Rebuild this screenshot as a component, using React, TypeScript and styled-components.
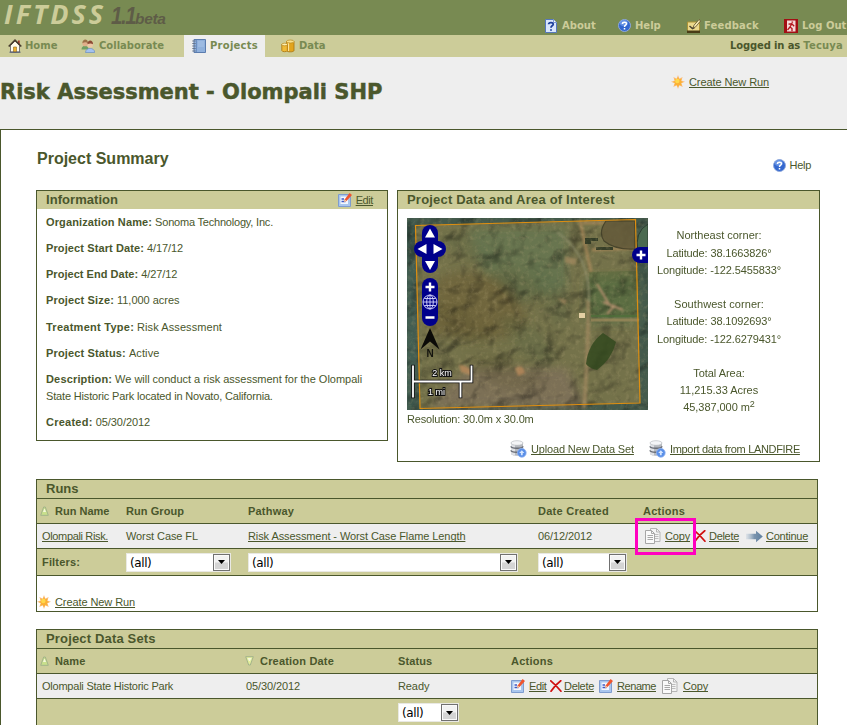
import React from "react";
import styled, { createGlobalStyle } from "styled-components";

const ink = "#4a572c";
const khaki = "#cccc99";
const moss = "#788a52";
const pale = "#eeeeee";

const GlobalStyle = createGlobalStyle`
  html, body { margin: 0; padding: 0; background: #fff; overflow: hidden; }
  body { font: 11px/17px "Liberation Sans", Arial, sans-serif; color: ${ink}; }
  * { box-sizing: border-box; }
  svg { display: block; flex: none; }
`;

const Page = styled.div`
  width: 847px;
  height: 725px;
  overflow: hidden;
  display: flex;
  flex-direction: column;
`;

const T = styled.span<{ $ls?: number }>`
  letter-spacing: ${(p) => p.$ls ?? 0}px;
  white-space: nowrap;
`;

/* ---------- top bar ---------- */
const TopBar = styled.header`
  height: 35px;
  flex: none;
  background: ${moss};
  display: flex;
  justify-content: space-between;
`;
const Logo = styled.div`
  display: flex;
  align-items: baseline;
  height: 35px;
  padding-left: 4px;
  white-space: nowrap;
`;
const LogoName = styled.span`
  font: italic 700 27px/28px "Open Sans", "Noto Sans", sans-serif;
  color: ${khaki};
  letter-spacing: 3px;
  width: 107px;
`;
const LogoVersion = styled.span`
  font: italic bold 24px/28px "Liberation Sans", sans-serif;
  color: #5e5c47;
  letter-spacing: -1.6px;
  width: 24px;
  transform: scaleX(0.85);
  transform-origin: left;
`;
const LogoBeta = styled.span`
  font: italic bold 15.5px/28px "Liberation Sans", sans-serif;
  color: #5e5c47;
  letter-spacing: -0.3px;
`;
const TopLinks = styled.nav`
  display: flex;
  width: 302px;
  padding-top: 17px;
`;
const BarItem = styled.a<{ $w: number; $icon: number; $tone?: string }>`
  display: grid;
  grid-template-columns: ${(p) => p.$icon}px auto;
  justify-content: start;
  align-items: center;
  width: ${(p) => p.$w}px;
  flex: none;
  height: 16px;
  font: bold 10px/16px "DejaVu Sans", Verdana, sans-serif;
  color: ${(p) => p.$tone ?? khaki};
`;

/* ---------- tab bar ---------- */
const TabBar = styled.nav`
  height: 22px;
  flex: none;
  background: ${khaki};
  display: flex;
`;
const Tab = styled.div<{ $w: number; $pad: number; $active?: boolean }>`
  width: ${(p) => p.$w}px;
  height: 22px;
  padding: 2px 0 0 ${(p) => p.$pad}px;
  background: ${(p) => (p.$active ? pale : "transparent")};
`;
const BarText = styled(T)`
  padding-top: 1px;
`;
const Session = styled.div`
  margin-left: auto;
  padding: 3px 4px 0 0;
  font: bold 10px/16px "DejaVu Sans", Verdana, sans-serif;
  span + span { color: ${moss}; margin-left: 3px; }
`;

/* ---------- title ---------- */
const TitleBar = styled.div`
  height: 72px;
  flex: none;
  background: ${pale};
  display: flex;
  padding-top: 16px;
`;
const Title = styled.h1`
  margin: 0;
  padding-top: 4px;
  width: 671px;
  font: bold 21px/30px "DejaVu Sans", sans-serif;
  -webkit-text-stroke: 0.5px ${ink};
  white-space: nowrap;
`;
const IconLink = styled.a<{ $icon: number; $w?: number }>`
  display: grid;
  grid-template-columns: ${(p) => p.$icon}px auto;
  justify-content: start;
  align-items: center;
  height: 18px;
  flex: none;
  width: ${(p) => (p.$w ? p.$w + "px" : "auto")};
`;
const U = styled(T)`
  text-decoration: underline;
  text-underline-offset: 1px;
  text-decoration-thickness: 1px;
  text-decoration-skip-ink: none;
`;

/* ---------- main ---------- */
const Main = styled.main`
  flex: 1;
  min-height: 0;
  border: solid ${ink};
  border-width: 1px 0 0 1px;
  padding: 20px 0 0 35px;
  overflow: hidden;
`;
const SummaryHead = styled.div`
  display: flex;
  justify-content: space-between;
  height: 40px;
  padding-right: 36px;
`;
const H2 = styled.h2`
  margin: 0 0 0 1px;
  font: bold 16px/18px "Liberation Sans", sans-serif;
`;
const HelpSpot = styled.div`
  padding-top: 6px;
`;
const Boxes = styled.div`
  display: grid;
  grid-template-columns: 352px 423px;
  column-gap: 9px;
  align-items: start;
`;
const Box = styled.section<{ $h: number }>`
  border: 1px solid ${ink};
  height: ${(p) => p.$h}px;
`;
const BoxHead = styled.div`
  background: ${khaki};
  height: 18px;
  padding: 0 14px 0 9px;
  display: flex;
  justify-content: space-between;
  font: bold 13px/17px "Liberation Sans", sans-serif;
  a { font-weight: normal; font-size: 11px; }
`;
const Facts = styled.div`
  padding: 5px 9px 0;
`;
const Fact = styled.p`
  margin: 0 0 9.15px;
  line-height: 17px;
  b { margin-right: 3px; }
`;
const AreaBody = styled.div`
  display: grid;
  grid-template-columns: 241px 142px;
  padding: 9px 0 0 9px;
  height: 231px;
`;
const Caption = styled.div`
  padding-top: 1px;
`;
const Corners = styled.div`
  text-align: center;
  padding-top: 9.4px;
`;
const Coord = styled.div<{ $gap?: boolean }>`
  line-height: 17.2px;
  height: 17.2px;
  margin-top: ${(p) => (p.$gap ? 17.2 : 0)}px;
  sup { font-size: 9px; line-height: 0; vertical-align: 4px; }
`;
const AreaLinks = styled.div`
  display: flex;
  padding-left: 112px;
`;

/* ---------- tables ---------- */
const Table = styled.section<{ $top: number; $cols: string }>`
  position: relative;
  width: 782px;
  margin-top: ${(p) => p.$top}px;
  border: 1px solid ${ink};
  --cols: ${(p) => p.$cols};
`;
const TableTitle = styled.div`
  background: ${khaki};
  height: 18px;
  padding-left: 9px;
  font: bold 13px/18px "Liberation Sans", sans-serif;
`;
const TableRow = styled.div<{ $h: number; $pale?: boolean; $bold?: boolean }>`
  display: grid;
  grid-template-columns: var(--cols);
  align-items: center;
  height: ${(p) => p.$h}px;
  border-top: 1px solid ${ink};
  background: ${(p) => (p.$pale ? pale : khaki)};
  font-weight: ${(p) => (p.$bold ? "bold" : "normal")};
`;
const Cell = styled.div<{ $pad?: number }>`
  display: flex;
  align-items: center;
  padding-left: ${(p) => p.$pad ?? 5}px;
  white-space: nowrap;
`;
const SortHead = styled.div<{ $icon: number }>`
  display: grid;
  grid-template-columns: ${(p) => p.$icon}px auto;
  align-items: center;
`;
const TableFoot = styled.div`
  height: 36px;
  border-top: 1px solid ${ink};
  padding: 17px 0 0 0;
`;
const SelectBox = styled.div<{ $w: number }>`
  width: ${(p) => p.$w}px;
  height: 19px;
  border: 1px solid #e9e9e4;
  background: #fff;
  display: flex;
  justify-content: space-between;
  padding-left: 3px;
  color: #000;
  font: 12px/19px "DejaVu Sans", Tahoma, sans-serif;
  letter-spacing: -0.4px;
`;
const SelectButton = styled.span`
  width: 17px;
  height: 17px;
  border: 1px solid #707070;
  box-shadow: inset 0 0 0 1px #fafafa;
  background: linear-gradient(#f2f2f2 45%, #d4d4d4 55%);
  display: grid;
  place-items: center;
`;
const Highlight = styled.div`
  position: absolute;
  left: 598px;
  top: 38px;
  width: 61px;
  height: 37px;
  border: 3px solid #ff00bf;
`;

/* ---------- icons ---------- */
const AboutIcon = () => (
  <svg width="12" height="14" viewBox="0 0 12 14">
    <path d="M.5 .5h8l3 3v10H.5z" fill="#d9e6fb" stroke="#5577bb" />
    <path d="M8.5 .5v3h3" fill="#fff" stroke="#7d9bd2" />
    <path d="M3.6 5.3C3.8 2.9 8.4 3 8.2 5.5C8 7 6 6.8 6 8.8M6 10.2v1.6" fill="none" stroke="#1c3f9c" strokeWidth="1.8" />
  </svg>
);
const HelpIcon = () => (
  <svg width="13" height="13" viewBox="0 0 13 13">
    <circle cx="6.5" cy="6.5" r="6" fill="#3468cf" stroke="#8fa9dc" />
    <ellipse cx="5.8" cy="4" rx="4" ry="3" fill="#7ea6ee" opacity=".7" />
    <path d="M4.4 5C4.5 2.6 8.7 2.7 8.5 5C8.3 6.3 6.5 6.2 6.5 8M6.5 9v1.5" fill="none" stroke="#fff" strokeWidth="1.5" />
  </svg>
);
const FeedbackIcon = () => (
  <svg width="14" height="14" viewBox="0 0 14 14">
    <path d="M.5 3h12v10H.5z" fill="#ecd98c" stroke="#ad9336" />
    <path d="M0 11.5h13V14H0z" fill="#4a3c16" />
    <path d="M2.5 7l3 2.5 2-1" fill="none" stroke="#4c4634" strokeWidth="1.5" />
    <path d="M6 9l1-2.8L12 .6l1.6 1.3-5 6z" fill="#f7eab4" stroke="#5a4c2a" strokeWidth=".8" />
  </svg>
);
const LogoutIcon = () => (
  <svg width="14" height="14" viewBox="0 0 14 14">
    <path d="M0 0h14v14H0z" fill="#a30f14" />
    <path d="M3 1.5h8.5v11H3z" fill="#f4dada" />
    <path d="M7.5 3.2h1.6M8 4.5L6 8l2 1.6v2.6M6 8l-2.5 3M4.5 5.2L7.8 4.8l2.4 2.4" fill="none" stroke="#b3151b" strokeWidth="1.3" />
  </svg>
);
const HomeIcon = () => (
  <svg width="14" height="14" viewBox="0 0 14 14">
    <path d="M2.5 6.5L7 2l4.5 4.5v6.5h-9z" fill="#fffbe9" stroke="#777" />
    <path d="M10 1.5h1.7v4H10z" fill="#a33b2a" />
    <path d="M.7 7.5L7 1.2l6.3 6.3" fill="none" stroke="#473c2c" strokeWidth="1.7" />
    <path d="M5.5 8h3v5h-3z" fill="#eeb22e" stroke="#8e6a1c" strokeWidth=".6" />
    <path d="M1.5 13.2h11" stroke="#4c5572" />
  </svg>
);
const PeopleIcon = () => (
  <svg width="14" height="14" viewBox="0 0 14 14">
    <path d="M.5 10.5c0-5 7-5 7 0z" fill="#6f9f62" />
    <circle cx="4.2" cy="4.4" r="2.8" fill="#e0ae8a" />
    <path d="M1.4 4.2c0-5 5.8-5 5.6 0C5.5 3 3.5 2.8 1.4 4.2z" fill="#9a7248" />
    <path d="M4.5 13.5c0-5.5 9.2-5.5 9.2 0z" fill="#a4c2ee" stroke="#5d86c4" strokeWidth=".6" />
    <circle cx="9.2" cy="5.8" r="2.8" fill="#edc6a5" />
    <path d="M6.4 5.3c0-5 5.8-4.8 5.6 0C10.5 4.2 8.5 4 6.4 5.3z" fill="#8c4a34" />
  </svg>
);
const NotebookIcon = () => (
  <svg width="15" height="14" viewBox="0 0 15 14">
    <path d="M2 .5h11.500v13H2z" fill="#8fb0dc" stroke="#5b7cae" />
    <path d="M4.500 1v12" stroke="#6c8fc2" />
    <path d="M6 3h6M6 5h6M6 7h6" stroke="#a9c4e8" />
    <path d="M.3 2h3.400M.3 4.500h3.400M.3 7h3.400M.3 9.500h3.400M.3 12h3.400" stroke="#66758d" />
  </svg>
);
const DataIcon = () => (
  <svg width="14" height="14" viewBox="0 0 14 14">
    <path d="M5.500 2.500v9c0 1.800 7.500 1.800 7.500 0v-9z" fill="#e2a41e" stroke="#a8720c" strokeWidth=".8" />
    <path d="M7.500 4v8" stroke="#fbe39a" strokeWidth="1.200" />
    <ellipse cx="9.250" cy="2.500" rx="3.750" ry="1.500" fill="#f9e08c" stroke="#b8861a" strokeWidth=".7" />
    <path d="M.8 5.500v6c0 1.600 5.500 1.600 5.500 0v-6z" fill="#f0bb37" stroke="#a8720c" strokeWidth=".8" />
    <ellipse cx="3.600" cy="5.500" rx="2.800" ry="1.300" fill="#fdeeb0" stroke="#b8861a" strokeWidth=".7" />
  </svg>
);
const StarIcon = () => (
  <svg width="14" height="14" viewBox="0 0 14 14">
    <path d="M7 0l1.300 3.400L11.700 1.900 10.400 5.400 14 6.800l-3.600 1.400 1.400 3.700-3.500-1.500L7 14l-1.300-3.600L2.200 12l1.500-3.800L0 6.800l3.700-1.400L2.300 1.900l3.400 1.500z" fill="#fbc084" />
    <path d="M7 1.800l1.200 2.400 2.600-.8-.8 2.500 2.200 1.100-2.200 1.100.8 2.600-2.600-.8L7 12.300 5.800 9.900l-2.600.8.8-2.600L1.800 7 4 5.900l-.8-2.500 2.600.8z" fill="#fbb036" />
    <circle cx="6.300" cy="6" r="2.200" fill="#ffd84c" />
  </svg>
);
const EditIcon = () => (
  <svg width="14" height="14" viewBox="0 0 14 14">
    <path d="M.5 1.500h12v12H.5z" fill="#a9c6ee" stroke="#7e9ccf" />
    <path d="M2.500 3.500h7.500v7.500H2.500z" fill="#f3f8ff" />
    <path d="M3.500 6h2.500M3.500 8.500h4" stroke="#3f58c4" strokeWidth="1.400" />
    <path d="M6 9l.8-2.800L11.600 0l2.400 1.900-5.500 6.200z" fill="#f0552e" />
    <path d="M6 9l.8-2.600 1.700 1.700z" fill="#f6d7b0" />
  </svg>
);
const DatabaseIcon = () => (
  <svg width="17" height="18" viewBox="0 0 17 18">
    <path d="M1 3v10.500c0 3 12 3 12 0V3z" fill="#b5b8be" />
    <path d="M1 3v10.500c0 1 1.500 1.800 4 2.100V4z" fill="#dfe1e5" />
    <path d="M1 6.300c0 2.600 12 2.600 12 0M1 10.300c0 2.600 12 2.600 12 0" fill="none" stroke="#686c75" strokeWidth="1.300" />
    <ellipse cx="7" cy="3" rx="6" ry="2.300" fill="#f4f5f7" stroke="#b0b3b9" strokeWidth=".6" />
    <circle cx="11.800" cy="12.800" r="4.400" fill="#5a8fe8" stroke="#8fb2f0" strokeWidth=".8" />
    <path d="M11.800 10.300l2.600 2.700h-1.700v2.200h-1.800V13H9.200z" fill="#d6e6ff" />
  </svg>
);
const CopyIcon = () => (
  <svg width="16" height="16" viewBox="0 0 16 16">
    <path d="M5.500 .5h6l3.500 3.500v9.500H5.500z" fill="#f4f4f4" stroke="#b5b5b5" />
    <path d="M11.500 .5V4H15" fill="none" stroke="#b5b5b5" />
    <path d="M10 6.500h3.500M10 8.500h3.500M10 10.500h3.500" stroke="#bdbdbd" />
    <path d="M.5 2.500h6l3 3v10h-9z" fill="#fafafa" stroke="#a6a6a6" />
    <path d="M6.500 2.500v3h3M2.500 7.500h5.500M2.500 9.500h5.500M2.500 11.500h5.500" fill="none" stroke="#a8a8a8" />
  </svg>
);
const DeleteIcon = () => (
  <svg width="12" height="12" viewBox="0 0 12 12">
    <path d="M.8 .8C4 3.500 8 7.500 11 11.200M10.800 .7C7 3.500 3.500 7.500 1 11.200" fill="none" stroke="#d01010" strokeWidth="1.700" strokeLinecap="round" />
  </svg>
);
const ArrowIcon = () => (
  <svg width="18" height="13" viewBox="0 0 18 13">
    <defs>
      <linearGradient id="arrowFade">
        <stop offset="0" stopColor="#9fb6cb" stopOpacity=".2" />
        <stop offset=".5" stopColor="#7a94ae" />
        <stop offset="1" stopColor="#5e7f9f" />
      </linearGradient>
    </defs>
    <path d="M0 3.700h10V.8l6.800 5.700L10 12.200V9.300H0z" fill="url(#arrowFade)" />
  </svg>
);
const SortIcon = ({ down }: { down?: boolean }) => (
  <svg width="9" height="10" viewBox="0 0 9 10">
    <path
      d={down ? "M.7 .7h7.600L5.300 9H3.700z" : "M.7 9.300h7.600L5.300 1H3.700z"}
      fill={down ? "#e3ee9c" : "#c9e08c"}
      stroke="#a2b38a"
      strokeLinejoin="round"
    />
    <path d={down ? "M2.500 2h4L5 5H4z" : "M3 6l1.200-3h.6L6 6z"} fill="#f4f8dc" />
  </svg>
);
const Caret = () => (
  <svg width="7" height="4" viewBox="0 0 7 4">
    <path d="M0 0h7L3.500 4z" fill="#000" />
  </svg>
);

const hills = [
  "M30 20q20-14 40 6t30 4q-12 22-34 12t-36-22z",
  "M80 60q14-18 34-6t26 24q-20 14-34 2t-26-20z",
  "M120 40q20 6 34 26t2 44q-16-8-22-30t-14-40z",
  "M20 90q24-12 44 8t22 30q-26 4-40-12t-26-26z",
  "M90 100q22-6 40 12t16 34q-28-2-38-18t-18-28z",
  "M60 140q26-10 46 6t34 8q-14 22-40 16t-40-30z",
];

const AreaMap = () => (
  <svg width="241" height="192" viewBox="0 0 241 192">
    <defs>
      <filter id="terrain" x="0" y="0" width="100%" height="100%" colorInterpolationFilters="sRGB">
        <feTurbulence type="fractalNoise" baseFrequency=".03 .036" numOctaves="3" seed="11" result="n" />
        <feDiffuseLighting in="n" surfaceScale="9" diffuseConstant="1.150" lightingColor="#ffffff">
          <feDistantLight azimuth="215" elevation="60" />
        </feDiffuseLighting>
      </filter>
      <filter id="grain" x="0" y="0" width="100%" height="100%" colorInterpolationFilters="sRGB">
        <feTurbulence type="fractalNoise" baseFrequency=".22" numOctaves="3" seed="4" />
        <feColorMatrix values="0 0 0 0 .74  0 0 0 0 .68  0 0 0 0 .5  2.600 0 0 0 -1.250" />
      </filter>
      <filter id="soft"><feGaussianBlur stdDeviation="5" /></filter>
      <filter id="smudge"><feGaussianBlur stdDeviation="1" /></filter>
      <clipPath id="mapClip"><path d="M0 0h241v192H0z" /></clipPath>
    </defs>
    <g clipPath="url(#mapClip)">
      <path d="M0 0h241v192H0z" fill="#445a4c" />
      <path d="M8.500 7.500L228.500 1.500 233 185 13 190.500z" fill="#74724a" />
      <g filter="url(#soft)">
        <path d="M60 10h100v60L90 90z" fill="#687450" />
        <path d="M30 60q50-20 80 20t-30 40-60-10z" fill="#6f663e" />
        <path d="M60 150h100l20 40H20z" fill="#7c7056" />
        <path d="M180 60h50v45h-50z" fill="#627248" />
        <path d="M0 0h6v192H0z" fill="#42645a" />
      </g>
      {hills.map((d, i) => (
        <path key={i} d={d} fill={i % 2 ? "#4f4a26" : "#4b6040"} opacity=".22" filter="url(#soft)" />
      ))}
      <path d="M182 54l49-1v44h-48z" fill="#56693c" opacity=".55" />
      <path d="M0 0h241v192H0z" filter="url(#terrain)" style={{ mixBlendMode: "multiply" }} opacity=".6" />
      <g filter="url(#smudge)">
        <path d="M181 82q1 42-4 108" fill="none" stroke="#a58a62" strokeWidth="4" opacity=".65" />
        <path d="M150 14q34 24 32 70" fill="none" stroke="#8f8f6c" strokeWidth="2" opacity=".8" />
        <path d="M173 2l11 52M185 32l44-2M176 5h22" fill="none" stroke="#b18b59" strokeWidth="3" opacity=".65" />
        <path d="M190 66l12 20M196 84l20 8M200 96l8-9" stroke="#b08d6c" strokeWidth="2" />
        <path d="M52 147q12 0 14 11l-12-4zM108 150q8-5 10 5l-7 3z" fill="#b98a5b" opacity=".8" />
        <path d="M158 38l12 3-2 6-10-2zM150 80l10 2-2 5z" fill="#a58a5f" opacity=".7" />
      </g>
      <path d="M178 20h13v3h-7v3h-6zM189 29h17v3h-17z" fill="#2d3723" opacity=".9" />
      <path d="M0 0h241v192H0z" filter="url(#grain)" opacity=".22" />
      <path d="M199 3h29v28q-20 1-31-8-6-9 2-20z" fill="#645a3a" stroke="#3f3c26" strokeWidth="1.200" opacity=".85" />
      <path d="M196 115q9 6 13 9-4 17-19 28-8-2-11-6 2-20 17-31z" fill="#33491f" opacity=".85" />
      <path d="M184 102h48" stroke="#a08a5c" strokeWidth="3" opacity=".7" />
      <path d="M184 98h48" stroke="#4c6e38" strokeWidth="1.500" />
      <path d="M172 95h6v5h-6z" fill="#e4cfa4" />
      <path d="M231 34q-4-20 10-28v34z" fill="#4b6a50" stroke="#2c3c30" />
    </g>
    <path d="M8.500 7.500L228.500 1.500 233 185 13 190.500z" fill="none" stroke="#e08f10" strokeWidth="1.200" />
    <g fill="#00008b">
      <rect x="15" y="7" width="16" height="48" rx="8" />
      <rect x="7" y="23" width="32" height="16" rx="8" />
      <rect x="15" y="60" width="16" height="48" rx="8" />
      <path d="M241 29h-8a8 8 0 0 0 0 16h8z" />
    </g>
    <path d="M23 10.500l5 9H18zM23 52l5-9H18zM10.500 31l9-5v10zM35.500 31l-9-5v10z" fill="#fff" />
    <path d="M18.500 69h9M23 64.500v9M18.500 99.500h9M229.500 37h9M234 32.500v9" stroke="#fff" strokeWidth="2.400" />
    <g fill="none" stroke="#d7d7ff" strokeWidth=".9">
      <circle cx="23" cy="84" r="7" />
      <ellipse cx="23" cy="84" rx="3.300" ry="7" />
      <path d="M16 84h14M23 77v14M17.300 80.500h11.400M17.300 87.500h11.400" />
    </g>
    <path d="M23 110l9.500 21.500-9.500-8-9.500 8z" fill="#0b0b08" />
    <text x="23" y="139" textAnchor="middle" fontFamily="Liberation Sans" fontWeight="bold" fontSize="10" fill="#14140e">N</text>
    <g fill="none" strokeLinecap="square">
      <path d="M6 148.500v30M6 163.500h58.500v-15M53.500 164.500v14" stroke="#111" strokeWidth="3.600" />
      <path d="M6 148.500v30M6 163.500h58.500v-15M53.500 164.500v14" stroke="#fff" strokeWidth="1.800" />
    </g>
    <g fontFamily="Liberation Sans" fontSize="9" fill="#fff" stroke="#111" strokeWidth="2" paintOrder="stroke" textAnchor="middle">
      <text x="35" y="158">2 km</text>
      <text x="29.500" y="177">1 mi</text>
    </g>
  </svg>
);

const Select = ({ w }: { w: number }) => (
  <SelectBox $w={w}>
    (all)
    <SelectButton><Caret /></SelectButton>
  </SelectBox>
);

const facts: { label: string; ls: number; value: React.ReactNode; vls: number }[] = [
  { label: "Organization Name:", ls: 0.12, value: "Sonoma Technology, Inc.", vls: -0.2 },
  { label: "Project Start Date:", ls: 0.11, value: "4/17/12", vls: -0.1 },
  { label: "Project End Date:", ls: 0.03, value: "4/27/12", vls: -0.1 },
  { label: "Project Size:", ls: 0.15, value: "11,000 acres", vls: -0.02 },
  { label: "Treatment Type:", ls: 0.26, value: "Risk Assessment", vls: 0.08 },
  { label: "Project Status:", ls: 0.15, value: "Active", vls: 0.1 },
  {
    label: "Description:", ls: 0.16, vls: -0.02,
    value: <>We will conduct a risk assessment for the Olompali<br /><T $ls={-0.16}>State Historic Park located in Novato, California.</T></>,
  },
  { label: "Created:", ls: 0.25, value: "05/30/2012", vls: -0.05 },
];

const coords: { text: React.ReactNode; ls: number; gap?: boolean }[] = [
  { text: "Northeast corner:", ls: 0 },
  { text: "Latitude: 38.1663826°", ls: -0.13 },
  { text: "Longitude: -122.5455833°", ls: -0.11 },
  { text: "Southwest corner:", ls: 0.08, gap: true },
  { text: "Latitude: 38.1092693°", ls: -0.13 },
  { text: "Longitude: -122.6279431°", ls: -0.11 },
  { text: "Total Area:", ls: -0.05, gap: true },
  { text: "11,215.33 Acres", ls: -0.02 },
  { text: <>45,387,000 m<sup>2</sup></>, ls: -0.05 },
];

export default function App() {
  return (
    <Page>
      <GlobalStyle />
      <TopBar>
        <Logo>
          <LogoName>IFTDSS</LogoName>
          <LogoVersion>1.1</LogoVersion>
          <LogoBeta>beta</LogoBeta>
        </Logo>
        <TopLinks>
          <BarItem $w={73} $icon={17}><AboutIcon /><BarText>About</BarText></BarItem>
          <BarItem $w={69} $icon={17}><HelpIcon /><BarText>Help</BarText></BarItem>
          <BarItem $w={97} $icon={17}><FeedbackIcon /><BarText $ls={0.15}>Feedback</BarText></BarItem>
          <BarItem $w={63} $icon={18}><LogoutIcon /><BarText>Log Out</BarText></BarItem>
        </TopLinks>
      </TopBar>

      <TabBar>
        <Tab $w={73} $pad={8}><BarItem $w={60} $icon={17} $tone={moss}><HomeIcon /><BarText>Home</BarText></BarItem></Tab>
        <Tab $w={111} $pad={8}><BarItem $w={90} $icon={18} $tone={moss}><PeopleIcon /><BarText>Collaborate</BarText></BarItem></Tab>
        <Tab $w={81} $pad={8} $active><BarItem $w={70} $icon={18} $tone={moss}><NotebookIcon /><BarText $ls={0.25}>Projects</BarText></BarItem></Tab>
        <Tab $w={80} $pad={16}><BarItem $w={60} $icon={18} $tone={moss}><DataIcon /><BarText>Data</BarText></BarItem></Tab>
        <Session><T $ls={-0.12}>Logged in as</T><T $ls={0.2}>Tecuya</T></Session>
      </TabBar>

      <TitleBar>
        <Title>Risk Assessment - Olompali SHP</Title>
        <IconLink $icon={18}><StarIcon /><U $ls={-0.09}>Create New Run</U></IconLink>
      </TitleBar>

      <Main>
        <SummaryHead>
          <H2>Project Summary</H2>
          <HelpSpot><IconLink $icon={17}><HelpIcon /><T $ls={-0.3}>Help</T></IconLink></HelpSpot>
        </SummaryHead>

        <Boxes>
          <Box $h={251}>
            <BoxHead>
              <T $ls={0.05}>Information</T>
              <IconLink $icon={18}><EditIcon /><U $ls={-0.4}>Edit</U></IconLink>
            </BoxHead>
            <Facts>
              {facts.map((f) => (
                <Fact key={f.label}>
                  <b><T $ls={f.ls}>{f.label}</T></b>
                  <T $ls={f.vls}>{f.value}</T>
                </Fact>
              ))}
            </Facts>
          </Box>

          <Box $h={272}>
            <BoxHead><T $ls={0.2}>Project Data and Area of Interest</T></BoxHead>
            <AreaBody>
              <div>
                <AreaMap />
                <Caption><T $ls={-0.17}>Resolution: 30.0m x 30.0m</T></Caption>
              </div>
              <Corners>
                {coords.map((c, i) => (
                  <Coord key={i} $gap={c.gap}><T $ls={c.ls}>{c.text}</T></Coord>
                ))}
              </Corners>
            </AreaBody>
            <AreaLinks>
              <IconLink $icon={21} $w={139}><DatabaseIcon /><U $ls={-0.15}>Upload New Data Set</U></IconLink>
              <IconLink $icon={21}><DatabaseIcon /><U $ls={-0.33}>Import data from LANDFIRE</U></IconLink>
            </AreaLinks>
          </Box>
        </Boxes>

        <Table $top={17} $cols="84px 122px 290px 105px 1fr">
          <TableTitle>Runs</TableTitle>
          <TableRow $h={25} $bold>
            <Cell $pad={3}><SortHead $icon={15}><SortIcon /><T>Run Name</T></SortHead></Cell>
            <Cell><T $ls={0.06}>Run Group</T></Cell>
            <Cell><T $ls={0.2}>Pathway</T></Cell>
            <Cell><T $ls={0.26}>Date Created</T></Cell>
            <Cell><T $ls={0.24}>Actions</T></Cell>
          </TableRow>
          <TableRow $h={25} $pale>
            <Cell><U $ls={-0.35}>Olompali Risk.</U></Cell>
            <Cell><T $ls={-0.09}>Worst Case FL</T></Cell>
            <Cell><U $ls={-0.09}>Risk Assessment - Worst Case Flame Length</U></Cell>
            <Cell><T $ls={-0.11}>06/12/2012</T></Cell>
            <Cell $pad={7}>
              <IconLink $icon={20} $w={49}><CopyIcon /><U $ls={-0.17}>Copy</U></IconLink>
              <IconLink $icon={15} $w={52}><DeleteIcon /><U $ls={-0.3}>Delete</U></IconLink>
              <IconLink $icon={20}><ArrowIcon /><U $ls={-0.25}>Continue</U></IconLink>
            </Cell>
          </TableRow>
          <TableRow $h={27}>
            <Cell><b><T $ls={0.17}>Filters:</T></b></Cell>
            <Cell><Select w={105} /></Cell>
            <Cell><Select w={270} /></Cell>
            <Cell><Select w={89} /></Cell>
          </TableRow>
          <TableFoot>
            <IconLink $icon={18}><StarIcon /><U $ls={-0.09}>Create New Run</U></IconLink>
          </TableFoot>
          <Highlight />
        </Table>

        <Table $top={17} $cols="204px 152px 113px 1fr">
          <TableTitle><T $ls={0.16}>Project Data Sets</T></TableTitle>
          <TableRow $h={25} $bold>
            <Cell $pad={3}><SortHead $icon={15}><SortIcon /><T $ls={0.1}>Name</T></SortHead></Cell>
            <Cell $pad={4}><SortHead $icon={15}><SortIcon down /><T $ls={0.19}>Creation Date</T></SortHead></Cell>
            <Cell><T $ls={0.1}>Status</T></Cell>
            <Cell><T $ls={0.24}>Actions</T></Cell>
          </TableRow>
          <TableRow $h={25} $pale>
            <Cell><T $ls={-0.23}>Olompali State Historic Park</T></Cell>
            <Cell><T $ls={-0.1}>05/30/2012</T></Cell>
            <Cell><T $ls={-0.1}>Ready</T></Cell>
            <Cell>
              <IconLink $icon={18} $w={39}><EditIcon /><U $ls={-0.4}>Edit</U></IconLink>
              <IconLink $icon={14} $w={49}><DeleteIcon /><U $ls={-0.3}>Delete</U></IconLink>
              <IconLink $icon={18} $w={63}><EditIcon /><U $ls={-0.43}>Rename</U></IconLink>
              <IconLink $icon={21}><CopyIcon /><U $ls={-0.17}>Copy</U></IconLink>
            </Cell>
          </TableRow>
          <TableRow $h={28}>
            <Cell />
            <Cell />
            <Cell><Select w={61} /></Cell>
          </TableRow>
        </Table>
      </Main>
    </Page>
  );
}
